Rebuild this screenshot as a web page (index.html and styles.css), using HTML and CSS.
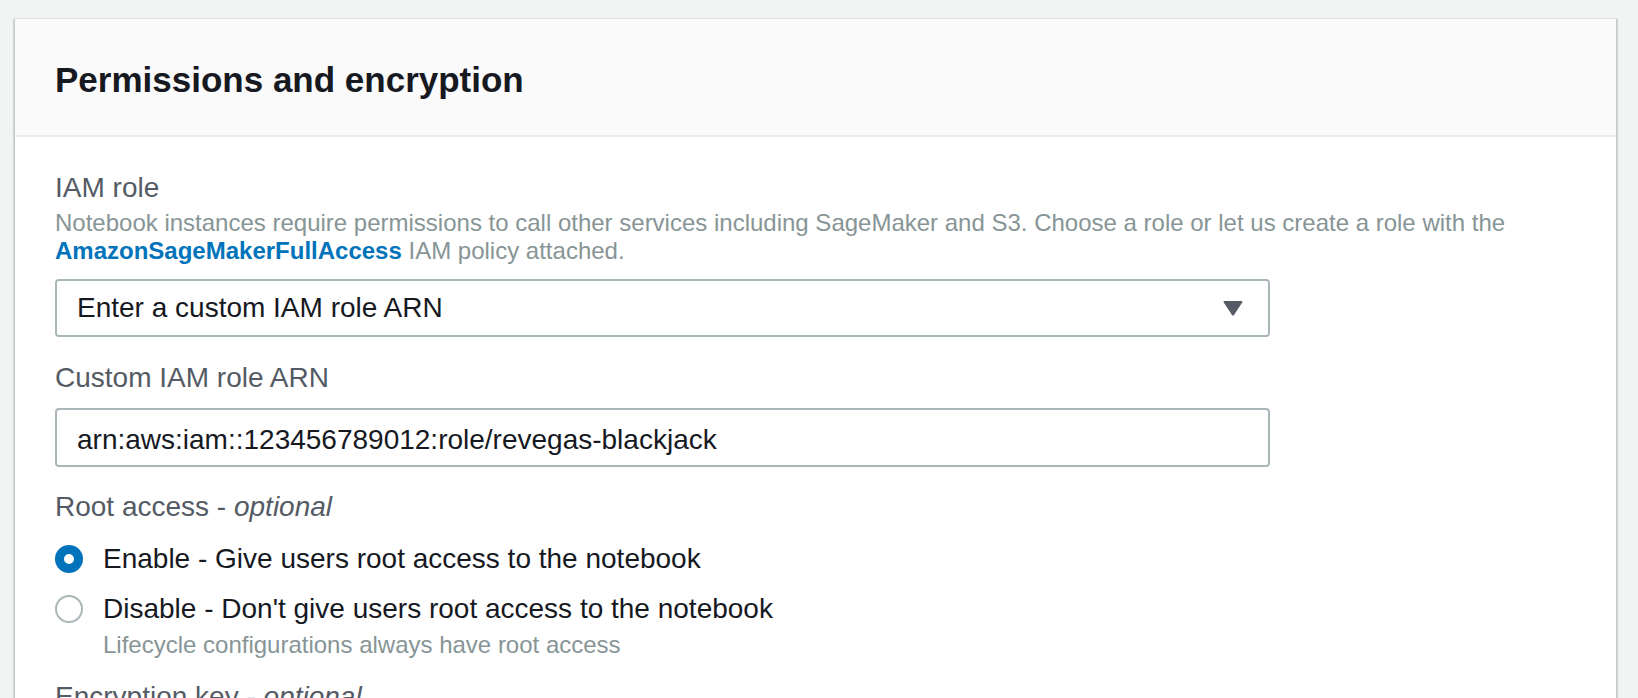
FILE: index.html
```html
<!DOCTYPE html>
<html lang="en">
<head>
<meta charset="utf-8">
<title>Permissions and encryption</title>
<link rel="stylesheet" href="styles.css">
</head>
<body>
<div class="page">
  <section class="card">
    <header class="card-header">
      <h2 class="card-title">Permissions and encryption</h2>
    </header>
    <div class="card-body">
      <div class="field">
        <div class="field-label">IAM role</div>
        <div class="field-desc">Notebook instances require permissions to call other services including SageMaker and S3. Choose a role or let us create a role with the <a class="link" href="#">AmazonSageMakerFullAccess</a> IAM policy attached.</div>
        <div class="select">
          <span class="select-value">Enter a custom IAM role ARN</span>
          <svg class="select-arrow" width="20" height="16" viewBox="0 0 20 16" aria-hidden="true"><path d="M1.5 1 H18.5 Q20 1 19.2 2.4 L11 15 Q10 16.4 9 15 L0.8 2.4 Q0 1 1.5 1 Z" fill="#545b64"/></svg>
        </div>
      </div>
      <div class="field field-gap">
        <div class="field-label">Custom IAM role ARN</div>
        <div class="input">arn:aws:iam::123456789012:role/revegas-blackjack</div>
      </div>
      <div class="field field-gap">
        <div class="field-label">Root access - <i>optional</i></div>
        <div class="radio-row radio-first">
          <span class="radio radio-checked"></span>
          <span class="radio-text">Enable - Give users root access to the notebook</span>
        </div>
        <div class="radio-row">
          <span class="radio"></span>
          <span class="radio-text">Disable - Don't give users root access to the notebook</span>
        </div>
        <div class="radio-hint">Lifecycle configurations always have root access</div>
      </div>
      <div class="field field-last">
        <div class="field-label">Encryption key - <i>optional</i></div>
      </div>
    </div>
  </section>
</div>
</body>
</html>
```
FILE: styles.css
```css
html, body {
  margin: 0;
  padding: 0;
}
body {
  background: #f2f3f3;
  font-family: "Liberation Sans", Arial, sans-serif;
  color: #16191f;
  height: 698px;
  overflow: hidden;
}
.page {
  padding: 18px 21px 0 14px;
}
.card {
  background: #ffffff;
  border: 1px solid #dfe4e4;
  border-left-color: #c3cbcc;
  border-right-color: #c3cbcc;
  box-shadow: 1px 1px 1px rgba(0, 28, 36, 0.12), -1px 1px 1px rgba(0, 28, 36, 0.12);
  height: 800px;
}
.card-header {
  background: #fafafa;
  border-bottom: 2px solid #eaeded;
  padding: 41px 40px 35px 40px;
}
.card-title {
  margin: 0;
  font-size: 35px;
  line-height: 40px;
  font-weight: 700;
  color: #16191f;
}
.card-body {
  padding: 33px 40px 0 40px;
}
.field-label {
  font-size: 28px;
  line-height: 36px;
  color: #545b64;
}
.field-label i {
  font-style: italic;
}
.field-desc {
  margin-top: 3px;
  font-size: 24px;
  line-height: 28px;
  color: #879596;
}
.link {
  color: #0073bb;
  font-weight: 700;
  text-decoration: none;
}
.select {
  box-sizing: border-box;
  margin-top: 14px;
  width: 1215px;
  height: 58px;
  border: 2px solid #aab7b8;
  border-radius: 4px;
  padding: 0 25px 0 20px;
  display: flex;
  align-items: center;
  justify-content: space-between;
  background: #ffffff;
}
.select-value {
  font-size: 28px;
  line-height: 54px;
  color: #16191f;
}
.select-arrow {
  display: block;
  flex: none;
}
.field-gap {
  margin-top: 23px;
}
.input {
  box-sizing: border-box;
  margin-top: 12px;
  width: 1215px;
  height: 59px;
  border: 2px solid #aab7b8;
  border-radius: 4px;
  padding: 5px 20px 0 20px;
  font-size: 28px;
  line-height: 50px;
  color: #16191f;
  background: #ffffff;
}
.field-gap + .field-gap {
  margin-top: 22px;
}
.radio-row {
  display: flex;
  align-items: center;
  gap: 20px;
  margin-top: 14px;
}
.radio-first {
  margin-top: 16px;
}
.radio {
  box-sizing: border-box;
  flex: none;
  width: 28px;
  height: 28px;
  border-radius: 50%;
  border: 2px solid #aab7b8;
  background: #ffffff;
}
.radio-checked {
  border: 9.5px solid #0073bb;
}
.radio-text {
  font-size: 28px;
  line-height: 36px;
  color: #16191f;
}
.radio-hint {
  margin: 4px 0 0 48px;
  font-size: 24px;
  line-height: 28px;
  color: #879596;
}
.field-last {
  margin-top: 20px;
}
```
